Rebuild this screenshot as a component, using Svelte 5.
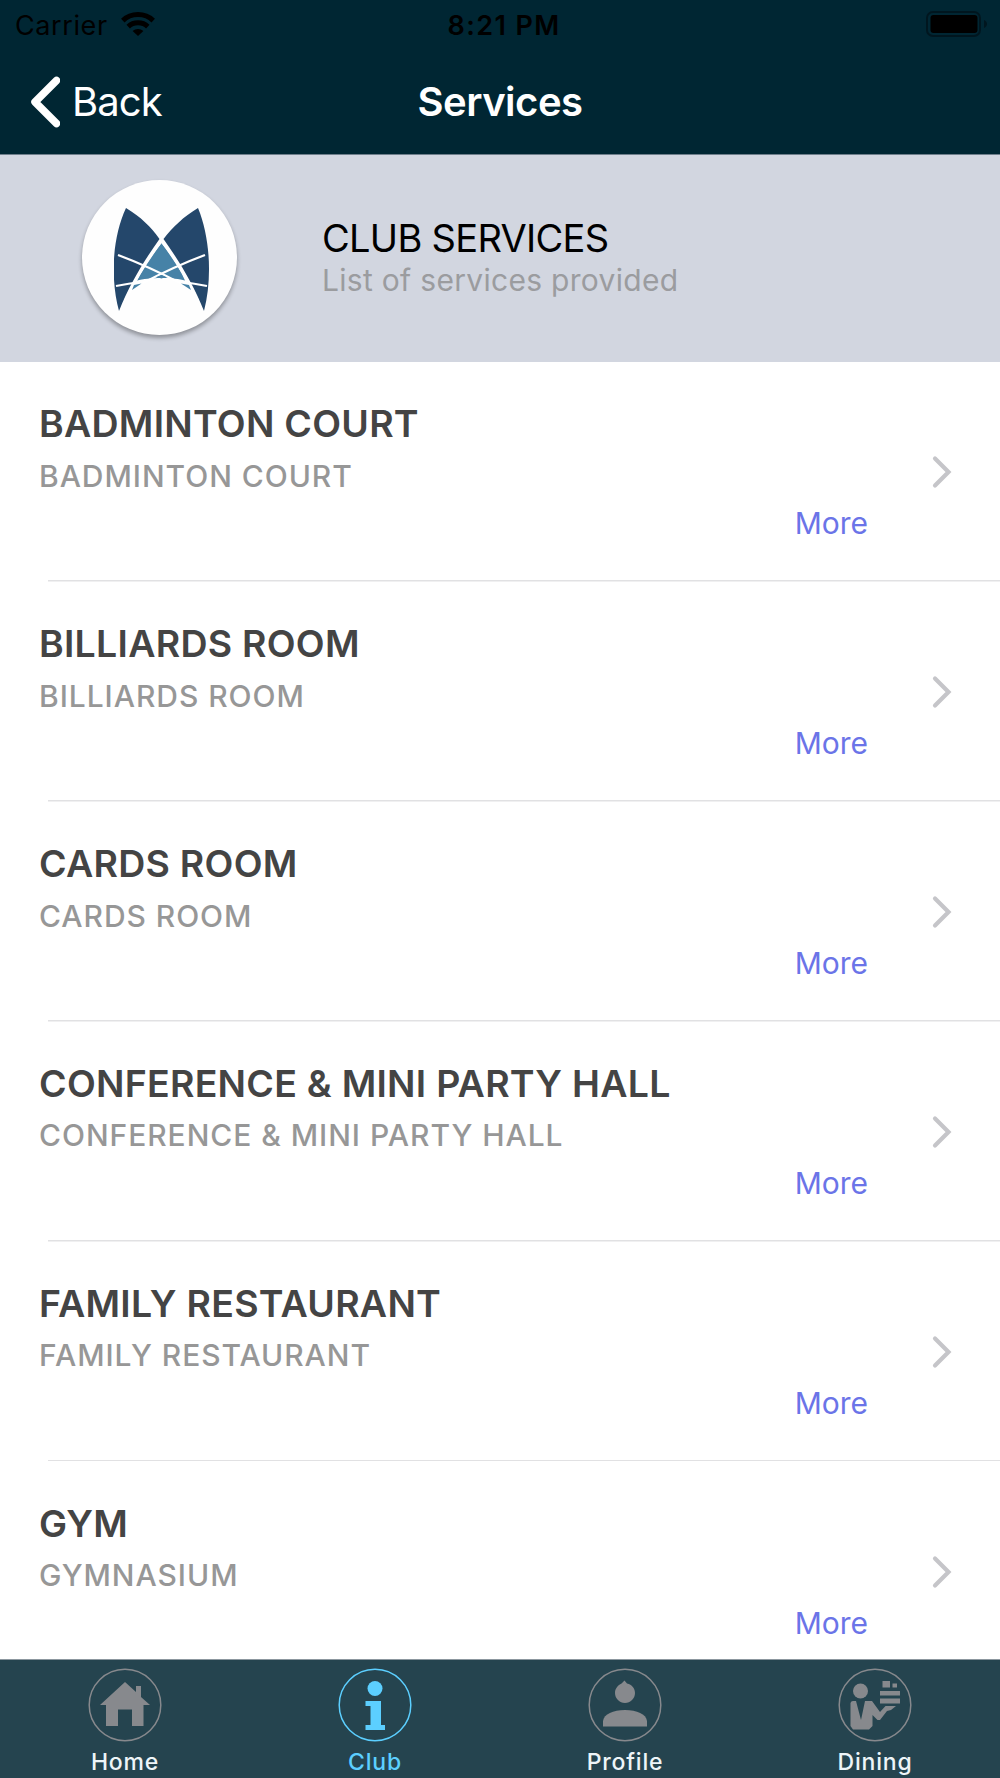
<script>
  let services = [
    { name: 'BADMINTON COURT', detail: 'BADMINTON COURT' },
    { name: 'BILLIARDS ROOM', detail: 'BILLIARDS ROOM' },
    { name: 'CARDS ROOM', detail: 'CARDS ROOM' },
    { name: 'CONFERENCE & MINI PARTY HALL', detail: 'CONFERENCE & MINI PARTY HALL' },
    { name: 'FAMILY RESTAURANT', detail: 'FAMILY RESTAURANT' },
    { name: 'GYM', detail: 'GYMNASIUM' }
  ];

  let tabs = ['Home', 'Club', 'Profile', 'Dining'];
  let active = 'Club';
</script>

<div class="app">
  <header class="top">
    <div class="status">
      <div class="carrier">
        <span>Carrier</span>
        <svg width="34" height="24" viewBox="0 0 34 24">
          <g fill="none" stroke="#000" stroke-width="5">
            <path d="M1.8 8.6 C10 .6 24 .6 32.2 8.6" />
            <path d="M7.2 14.6 C12.5 9.6 21.5 9.6 26.8 14.6" />
          </g>
          <path d="M11.6 19 C14.5 16.2 19.5 16.2 22.4 19 L17 24 Z" />
        </svg>
      </div>
      <div class="time">8:21 PM</div>
      <div class="power">
        <svg width="62" height="26" viewBox="0 0 62 26">
          <rect x="1" y="1" width="53" height="24" rx="6" fill="none" stroke="#00161f" stroke-width="2" />
          <rect x="4.5" y="4" width="47" height="18" rx="3" />
          <path d="M58 9 C62 10.5 62 15.5 58 17 Z" fill="#00161f" />
        </svg>
      </div>
    </div>
    <nav class="navbar">
      <button class="back">
        <svg width="30" height="52" viewBox="0 0 30 52">
          <path d="M26.5 4.5 L5 26 L26.5 47.5" fill="none" stroke="#fff" stroke-width="7.5" stroke-linecap="round" stroke-linejoin="round" />
        </svg>
        <span>Back</span>
      </button>
      <h1>Services</h1>
      <div></div>
    </nav>
  </header>

  <section class="banner">
    <div class="logo">
      <svg width="96" height="104" viewBox="0 0 96 104">
        <g fill="#24476b">
          <path d="M12 0 C27 9 37 19 45.5 31 C32 50 16 75 5 103 C-4 70 -1.5 29 12 0 Z" />
          <path d="M84 0 C69 9 59 19 49.5 31 C63 50 79 75 90 103 C98.5 70 96 29 84 0 Z" />
        </g>
        <path d="M47.5 35 C38 47 30 59 23 72.5 C34 69 61 69 71 72.5 C65 59 57 47 47.5 35 Z" fill="#4682a7" />
        <path d="M10 92 C20 74 34 71 47.5 71 C61 71 75 74 85 92 Z" fill="#fefefe" />
        <g fill="none" stroke="#fff" stroke-width="2.6">
          <path d="M47.5 33 C37 47 24 66 14 87" />
          <path d="M47.5 33 C58 47 71 66 81 87" />
        </g>
        <g fill="none" stroke="#fff" stroke-width="2.2">
          <path d="M4 47 C20 53 47 65 66 75" />
          <path d="M91 47 C75 53 48 65 29 75" />
          <path d="M2 78 C12 76 18 75 26 74" />
          <path d="M93 78 C83 76 77 75 69 74" />
        </g>
        <g fill="#4682a7">
          <path d="M42.5 69 L47.5 67 L52 69 L47.5 70.5 Z" />
          <path d="M20 77 L27.5 75.5 L18 82 Z" />
          <path d="M75 77 L67 75.5 L77 82 Z" />
        </g>
      </svg>
    </div>
    <div class="intro">
      <h2>CLUB SERVICES</h2>
      <p>List of services provided</p>
    </div>
  </section>

  <main>
    {#each services as service}
      <div class="row">
        <div class="info">
          <h3>{service.name}</h3>
          <p>{service.detail}</p>
          <a href="#more">More</a>
        </div>
        <svg class="chevron" width="20" height="34" viewBox="0 0 20 34">
          <path d="M3 3.5 L16.5 17 L3 30.5" fill="none" stroke="#c5c5c9" stroke-width="4.2" stroke-linecap="round" />
        </svg>
      </div>
    {/each}
  </main>

  <footer>
    {#each tabs as tab}
      <button class="tab" class:active={tab === active}>
        <svg width="74" height="74" viewBox="0 0 74 74" fill="currentColor">
          <circle cx="37" cy="37" r="35.8" fill="none" stroke="currentColor" stroke-width="1.5" />
          {#if tab === 'Home'}
            <path d="M12 37 L37 14 L48 24 V18 H53 V29 L62 37 H55.5 V58 H44 V41.5 H30 V58 H18 V37 Z" />
          {:else if tab === 'Club'}
            <circle cx="37" cy="20.5" r="7.5" />
            <path d="M27.5 33 H43 V57 H47 V62 H27.5 V57 H32.5 V38 H27.5 Z" />
          {:else if tab === 'Profile'}
            <path d="M36.5 12.5 L39 15.5 C44 16.5 47 20.5 47 25 C47 30.5 42.5 35 37 35 C31.5 35 27 30.5 27 25 C27 20.5 30 17 33.5 15.5 Z" />
            <path d="M15 58.5 V53 C16 46 25 42 37 42 C49 42 58 46 59 53 V58.5 Z" />
          {:else}
            <circle cx="22.5" cy="23" r="7.5" />
            <path d="M12.5 35 Q13 33 15 33 H18 L23 52 L27 33 H34 L42 44 L47.5 38 H58 L53 42 L49 43 L42 52 H39.5 L34.5 47 V58 L31 61.5 H15 L12.5 58 Z" />
            <path d="M44.5 13 H52 V19.5 H44.5 Z M54.5 15.5 H59 V19.5 H54.5 Z M42 23 H62 V27.5 H42 Z M42 30.5 H62 V35.5 H42 Z" />
          {/if}
        </svg>
        <span>{tab}</span>
      </button>
    {/each}
  </footer>
</div>

<style>
  :global(body) {
    margin: 0;
    background: #fff;
  }

  .app {
    width: 1000px;
    height: 1778px;
    display: flex;
    flex-direction: column;
    overflow: hidden;
    font-family: Inter, "Liberation Sans", sans-serif;
  }

  h1, h2, h3, p {
    margin: 0;
  }

  button {
    border: 0;
    padding: 0;
    background: none;
    font-family: inherit;
  }

  .top {
    flex: none;
    height: 155px;
    background: #002633;
    border-bottom: 1px solid #6f7f8c;
    box-sizing: border-box;
  }

  .status, .navbar {
    display: grid;
    grid-template-columns: 1fr auto 1fr;
    align-items: center;
  }

  .status {
    height: 50px;
    font-size: 27px;
  }

  .carrier {
    display: flex;
    align-items: center;
    gap: 13px;
    padding-left: 15px;
    letter-spacing: 0.6px;
  }

  .carrier svg {
    margin-bottom: 3px;
  }

  .time {
    font-weight: 600;
    letter-spacing: 1.4px;
    padding-left: 8px;
  }

  .power {
    display: flex;
    justify-content: flex-end;
    padding-right: 12px;
    margin-bottom: 2px;
  }

  .navbar {
    height: 103px;
    color: #fff;
  }

  .back {
    display: flex;
    align-items: center;
    gap: 12px;
    padding-left: 30px;
    font-size: 40px;
    color: #fff;
    letter-spacing: -0.9px;
  }

  h1 {
    font-size: 40px;
    font-weight: 600;
    letter-spacing: -0.5px;
  }

  .banner {
    flex: none;
    display: flex;
    height: 207px;
    background: #d2d6e0;
  }

  .logo {
    width: 155px;
    height: 155px;
    margin: 25px 0 0 82px;
    border-radius: 50%;
    background: #fefefe;
    box-shadow: 0 3px 4px rgba(0, 0, 0, 0.32);
    display: flex;
    align-items: center;
    justify-content: center;
  }

  .logo svg {
    margin-top: 4px;
    margin-left: 4px;
  }

  .intro {
    padding: 60px 0 0 85px;
  }

  h2 {
    font-size: 38px;
    font-weight: 400;
    line-height: 46px;
    letter-spacing: -0.7px;
  }

  .intro p {
    font-size: 30px;
    line-height: 38px;
    color: #9b9c9f;
    letter-spacing: 0.3px;
  }

  main {
    flex: 1;
    min-height: 0;
    overflow: hidden;
  }

  .row {
    display: flex;
    height: 219.9px;
    padding-left: 39px;
    box-sizing: border-box;
    background: linear-gradient(#e1e1e3, #e1e1e3) 48px 100% / 100% 1.5px no-repeat;
  }

  .info {
    width: 829px;
    display: flex;
    flex-direction: column;
    padding-top: 39.4px;
  }

  h3 {
    font-size: 37.5px;
    font-weight: 600;
    line-height: 46px;
    color: #444;
    letter-spacing: 0.25px;
  }

  .info p {
    margin-top: 9.4px;
    font-size: 30px;
    font-weight: 550;
    line-height: 38px;
    color: #979797;
    letter-spacing: 0.95px;
  }

  .info a {
    align-self: flex-end;
    margin-top: 9.6px;
    font-size: 30px;
    line-height: 38px;
    color: #6b74e8;
    text-decoration: none;
  }

  .chevron {
    margin: 93.4px 0 0 64px;
  }

  footer {
    flex: none;
    display: grid;
    grid-template-columns: repeat(4, 1fr);
    height: 119px;
    box-sizing: border-box;
    border-top: 1px solid #8c979f;
    background: #25444f;
  }

  .tab {
    display: flex;
    flex-direction: column;
    align-items: center;
    padding-top: 8px;
    color: #87898d;
    font-size: 23px;
    font-weight: 550;
    letter-spacing: 0.8px;
  }

  .tab span {
    margin-top: 6px;
    line-height: 28px;
    color: #eef5f8;
  }

  .tab.active, .tab.active span {
    color: #5ccfff;
  }
</style>
